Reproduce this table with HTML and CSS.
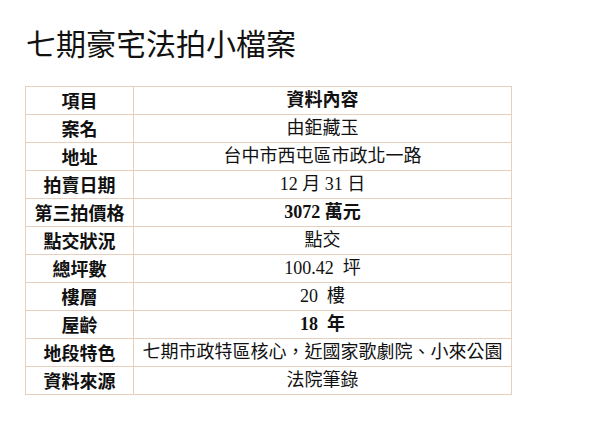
FILE: index.html
```html
<!DOCTYPE html>
<html lang="zh-Hant">
<head>
<meta charset="utf-8">
<link rel="stylesheet" href="styles.css">
</head>
<body>
<h1 class="title">七期豪宅法拍小檔案</h1>
<table class="info">
  <tr><th>項目</th><td class="b">資料內容</td></tr>
  <tr><th>案名</th><td>由鉅藏玉</td></tr>
  <tr><th>地址</th><td>台中市西屯區市政北一路</td></tr>
  <tr><th>拍賣日期</th><td>12 月 31 日</td></tr>
  <tr><th>第三拍價格</th><td class="b">3072 萬元</td></tr>
  <tr><th>點交狀況</th><td>點交</td></tr>
  <tr><th>總坪數</th><td>100.42&nbsp; 坪</td></tr>
  <tr><th>樓層</th><td>20&nbsp; 樓</td></tr>
  <tr><th>屋齡</th><td class="b">18&nbsp; 年</td></tr>
  <tr><th>地段特色</th><td>七期市政特區核心，近國家歌劇院、小來公園</td></tr>
  <tr><th>資料來源</th><td>法院筆錄</td></tr>
</table>
</body>
</html>
```
FILE: styles.css
```css
html, body {
  margin: 0;
  padding: 0;
  background: #ffffff;
}
body {
  width: 600px;
  height: 441px;
  overflow: hidden;
  color: #111;
}
.title {
  margin: 0;
  padding: 24px 0 0 26px;
  height: 62px;
  box-sizing: border-box;
  font-family: "Noto Sans CJK TC", sans-serif;
  font-weight: 400;
  font-size: 30px;
  line-height: 36px;
  letter-spacing: 0;
}
.info {
  margin: 24px 0 0 25px;
  width: 487px;
  border-collapse: collapse;
  table-layout: fixed;
}
.info th, .info td {
  border: 1px solid #e6cfbd;
  height: 27px;
  padding: 0;
  text-align: center;
  vertical-align: middle;
  font-size: 18px;
  line-height: 27px;
  white-space: nowrap;
}
.info th {
  width: 107px;
  font-family: "Noto Sans CJK TC", sans-serif;
  font-weight: 700;
}
.info td {
  font-family: "Liberation Serif", "Noto Sans CJK TC", serif;
  font-weight: 400;
}
.info td.b {
  font-weight: 700;
}
```
